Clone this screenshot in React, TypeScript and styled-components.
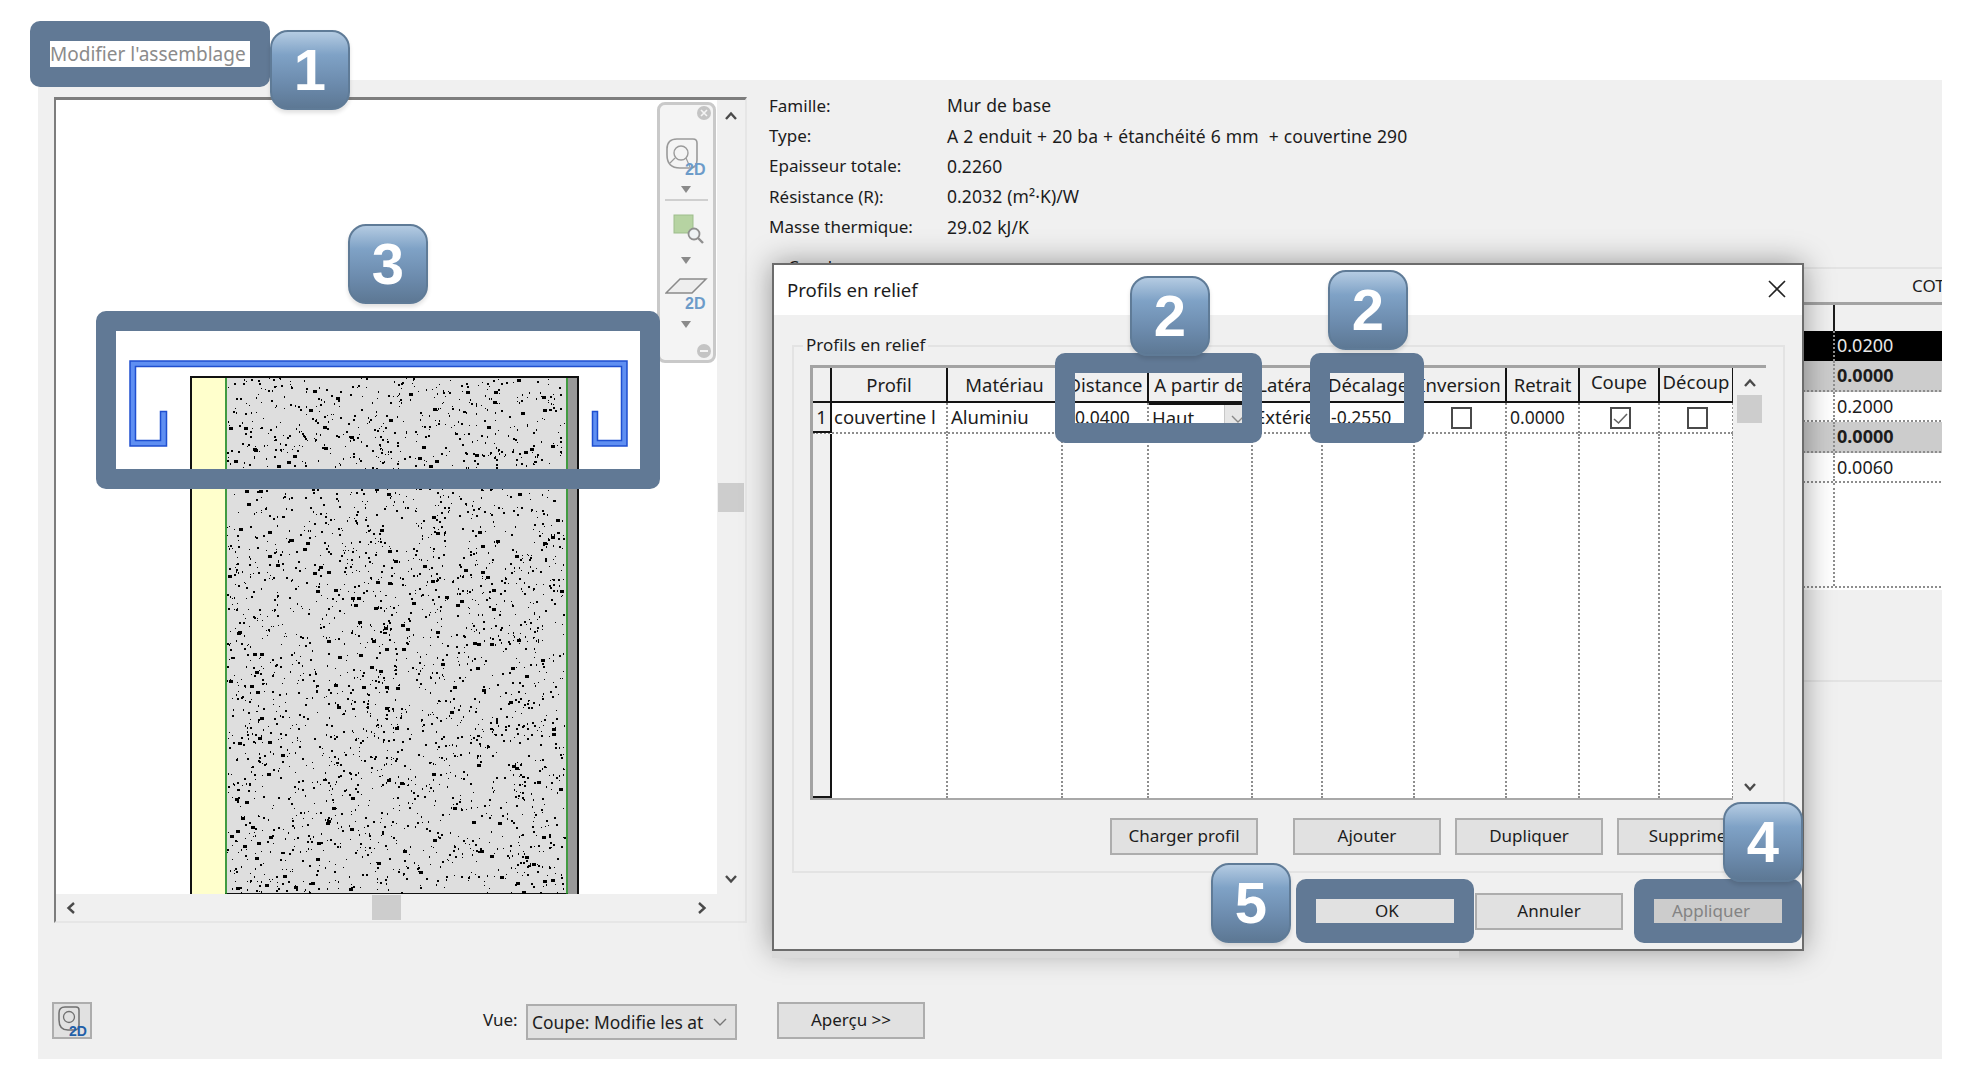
import { Fragment } from 'react';
import styled, { createGlobalStyle } from 'styled-components';

const GlobalStyle = createGlobalStyle`
  html, body {
    margin: 0;
    padding: 0;
    background: #fff;
  }
  body {
    font-family: "Noto Sans", "Open Sans", sans-serif;
    font-size: 17px;
    color: #1c1c1c;
  }
  * {
    box-sizing: border-box;
  }
`;

const HILITE = '#617995';

const Page = styled.div`
  position: relative;
  width: 1974px;
  height: 1066px;
  overflow: hidden;
  padding-top: 80px;
  filter: blur(0.45px);
`;

const Panel = styled.div`
  position: relative;
  width: 1904px;
  height: 979px;
  margin-left: 38px;
  padding: 10px 0 0 14px;
  background: #f0f0f0;
  overflow: hidden;
  display: grid;
  grid-template-columns: 695px 1fr;
  grid-template-rows: 833px 40px;
  row-gap: 79px;
  column-gap: 22px;
`;

/* overlays: numbered badges and frames */
const Badge = styled.div<{ $x: number; $y: number }>`
  position: absolute;
  left: ${(p) => p.$x}px;
  top: ${(p) => p.$y}px;
  z-index: 6;
  width: 80px;
  height: 80px;
  border: 2px solid #5f7b97;
  border-radius: 18px;
  background: linear-gradient(#b4cbe2 0%, #7fa2c6 30%, #6c8bad 68%, #5d7894 100%);
  box-shadow: 0 3px 4px rgba(0, 0, 0, 0.12);
  color: #fff;
  font-family: "Liberation Sans", Arial, sans-serif;
  font-weight: 700;
  font-size: 58px;
  line-height: 76px;
  text-align: center;
`;

const Frame = styled.div<{ $x: number; $y: number; $w: number; $h: number }>`
  position: absolute;
  left: ${(p) => p.$x}px;
  top: ${(p) => p.$y}px;
  z-index: 5;
  width: ${(p) => p.$w}px;
  height: ${(p) => p.$h}px;
  border: 20px solid ${HILITE};
  border-radius: 10px;
`;

const AssemblyLabel = styled.div`
  position: absolute;
  left: 30px;
  top: 21px;
  z-index: 5;
  width: 240px;
  height: 66px;
  padding: 20px;
  background: ${HILITE};
  border-radius: 10px;
`;

const AssemblyText = styled.div`
  height: 26px;
  background: #fff;
  color: #8b8b8b;
  font-size: 19px;
  line-height: 27px;
  white-space: nowrap;
`;

/* preview on the left */
const Preview = styled.div`
  margin: 7px 0 0 2px;
  width: 693px;
  height: 826px;
  border-top: 3px solid #7d7d7d;
  border-left: 2px solid #7d7d7d;
  border-right: 2px solid #e6e6e6;
  border-bottom: 2px solid #e6e6e6;
  display: grid;
  grid-template-columns: 661px 1fr;
  grid-template-rows: 794px 1fr;
`;

const Canvas = styled.div`
  position: relative;
  background: #fff;
  overflow: visible;
`;

const CanvasDrawing = styled.svg`
  display: block;
`;

const VScroll = styled.div`
  display: flex;
  flex-direction: column;
  align-items: center;
  padding: 9px 0 8px;
`;

const VThumb = styled.div`
  width: 26px;
  height: 29px;
  margin-top: 360px;
  margin-bottom: auto;
  background: #cdcdcd;
`;

const HScroll = styled.div`
  grid-column: 1 / -1;
  display: flex;
  align-items: center;
  padding: 0 36px 0 8px;
  justify-content: space-between;
`;

const HThumb = styled.div`
  width: 29px;
  height: 25px;
  background: #cdcdcd;
`;

const ChevronSvg = styled.svg<{ $dir: 'up' | 'down' | 'left' | 'right' }>`
  display: block;
  flex: none;
  transform: rotate(
    ${(p) => ({ up: 0, right: 90, down: 180, left: 270 })[p.$dir]}deg
  );
`;

const Chevron = ({ dir }: { dir: 'up' | 'down' | 'left' | 'right' }) => (
  <ChevronSvg $dir={dir} width="14" height="14" viewBox="0 0 14 14">
    <path d="M2 10 L7 4.5 L12 10" fill="none" stroke="#4a4a4a" strokeWidth="2.4" />
  </ChevronSvg>
);

/* floating navigation bar */
const NavBar = styled.div`
  position: absolute;
  left: 601px;
  top: 2px;
  z-index: 2;
  width: 59px;
  height: 261px;
  background: #f4f4f4;
  border: 3px solid #c9c9c9;
  border-radius: 8px;
  display: flex;
  flex-direction: column;
  align-items: center;
`;

const NavIcon = styled.svg<{ $mt: number; $shift?: number }>`
  display: block;
  flex: none;
  margin-top: ${(p) => p.$mt}px;
  margin-left: ${(p) => p.$shift ?? 0}px;
`;

const NavRule = styled.div`
  width: 43px;
  height: 2px;
  margin-top: 6px;
  background: #cfcfcf;
`;

const NavArrow = ({ mt }: { mt: number }) => (
  <NavIcon $mt={mt} $shift={-2} width="12" height="7" viewBox="0 0 12 7">
    <path d="M1 0 H11 L6 7 Z" fill="#8a8a8a" />
  </NavIcon>
);

const Wheel2D = () => (
  <>
    <path
      d="M12 1 H28 Q32 1 32 5 V22 Q32 30 25 30 H15 Q2 30 2 17 V11 Q2 1 12 1Z"
      fill="none"
      stroke="#9a9a9a"
      strokeWidth="1.6"
    />
    <circle cx="16" cy="15" r="7" fill="none" stroke="#9a9a9a" strokeWidth="1.4" />
    <path d="M10 20 L5 25 M21 20 L25 29" stroke="#9a9a9a" strokeWidth="1.2" />
  </>
);

/* info on the right */
const RightColumn = styled.div`
  min-width: 0;
`;

const InfoGrid = styled.div`
  display: grid;
  grid-template-columns: 178px 1fr;
  grid-auto-rows: 30.4px;
  align-items: center;
  white-space: pre;
`;

const InfoValue = styled.span`
  font-size: 17.5px;
  letter-spacing: 0.08px;
  word-spacing: 0.4px;
`;

const CouchesGroup = styled.div`
  position: relative;
  width: 1200px;
  height: 415px;
  margin: 25px 0 0 11px;
  border-top: 2px solid #e3e3e3;
  border-bottom: 2px solid #e3e3e3;
`;

const GroupLegend = styled.span<{ $left: number }>`
  position: absolute;
  left: ${(p) => p.$left}px;
  top: -13px;
  padding: 0 3px;
  background: #f0f0f0;
  line-height: 22px;
`;

const CouchesHead = styled.div`
  height: 33px;
  padding-left: 1132px;
  line-height: 33px;
  white-space: nowrap;
`;

const CouchesTable = styled.div`
  border-top: 3px solid #a3a3a3;
  border-bottom: 2px solid #fff;
`;

const CouchesRow = styled.div<{ $tone?: 'head' | 'dark' | 'gray' | 'plain' }>`
  display: grid;
  grid-template-columns: 1053px 1fr;
  height: ${(p) => (p.$tone === 'head' ? 26 : 30.5)}px;
  background: ${(p) =>
    p.$tone === 'dark' ? '#000' : p.$tone === 'gray' ? '#cccccc' : p.$tone === 'head' ? '#f0f0f0' : '#fff'};
  color: ${(p) => (p.$tone === 'dark' ? '#e8e8e8' : '#1c1c1c')};
  font-weight: ${(p) => (p.$tone === 'gray' ? 700 : 400)};
  font-size: 18px;
  border-bottom: ${(p) => (p.$tone === 'head' || p.$tone === 'dark' ? 'none' : '2px dotted #8d8d8d')};
`;

const CouchesCell = styled.div<{ $head?: boolean }>`
  grid-column: 2;
  padding-left: 2px;
  border-left: ${(p) => (p.$head ? '2px solid #1c1c1c' : '2px dotted #8d8d8d')};
  line-height: 28px;
`;

const CouchesFiller = styled.div`
  display: grid;
  grid-template-columns: 1053px 1fr;
  height: 105px;
  background: #fff;
  border-bottom: 2px dotted #8d8d8d;
`;

/* footer of the main window */
const BottomBar = styled.div`
  grid-column: 1 / -1;
  display: flex;
  align-items: flex-start;
`;

const Button = styled.div<{ $w?: number; $disabled?: boolean }>`
  flex: none;
  width: ${(p) => p.$w ?? 148}px;
  height: 37px;
  background: ${(p) => (p.$disabled ? '#cccccc' : '#e1e1e1')};
  border: 2px solid ${(p) => (p.$disabled ? '#bfbfbf' : '#adadad')};
  color: ${(p) => (p.$disabled ? '#838383' : '#1c1c1c')};
  line-height: 32px;
  text-align: center;
  white-space: nowrap;
  overflow: hidden;
`;

const IconButton = styled.div`
  width: 40px;
  height: 37px;
  background: #e1e1e1;
  border: 2px solid #adadad;
  display: flex;
  align-items: center;
  justify-content: center;
`;

const VueLabel = styled.span`
  width: 43px;
  margin-left: 391px;
  line-height: 36px;
`;

const Select = styled.div`
  width: 211px;
  height: 36px;
  margin-top: 2px;
  margin-right: 40px;
  padding: 0 8px 0 4px;
  background: #e1e1e1;
  border: 2px solid #adadad;
  display: flex;
  align-items: center;
  justify-content: space-between;
  font-size: 17.4px;
  white-space: nowrap;
`;

/* dialog */
const Dialog = styled.div`
  position: absolute;
  left: 734px;
  top: 183px;
  z-index: 3;
  width: 1032px;
  height: 688px;
  background: #f0f0f0;
  border: 2px solid #6c6c6c;
  box-shadow: 0 0 28px rgba(0, 0, 0, 0.38);

  &::after {
    content: '';
    position: absolute;
    left: -2px;
    top: 100%;
    width: 687px;
    height: 7px;
    margin-top: 2px;
    background: #dadada;
  }
`;

const TitleBar = styled.div`
  height: 50px;
  padding: 0 16px 2px 13px;
  background: #fff;
  font-size: 18.6px;
  display: flex;
  align-items: center;
  justify-content: space-between;
`;

const ReliefGroup = styled.div`
  position: relative;
  height: 528px;
  margin: 30px 17px 0 18px;
  padding: 18px 15px 0 16px;
  border: 2px solid #e3e3e3;
`;

const GridBox = styled.div`
  width: 956px;
  height: 435px;
  border-top: 3px solid #a3a3a3;
  border-left: 3px solid #a3a3a3;
  display: grid;
  grid-template-columns: 920px 33px;
`;

const COLUMNS = '19px 116px 115px 86px 104px 70px 92px 92px 73px 80px 74px';

const TableBody = styled.div`
  display: flex;
  flex-direction: column;
  background: #fff;
  overflow: hidden;
  border-bottom: 2px solid #a8a8a8;
  font-size: 18.5px;
`;

const HeaderRow = styled.div`
  display: grid;
  grid-template-columns: ${COLUMNS};
  height: 35px;
  flex: none;
  background: #f0f0f0;
  border-bottom: 2px solid #141414;
`;

const HeaderCell = styled.div<{ $wrap?: boolean }>`
  display: flex;
  justify-content: center;
  align-items: ${(p) => (p.$wrap ? 'flex-start' : 'center')};
  border-right: 2px solid #141414;
  overflow: hidden;
  white-space: ${(p) => (p.$wrap ? 'pre-line' : 'nowrap')};
  text-align: center;
  line-height: ${(p) => (p.$wrap ? '27px' : '30px')};
`;

const DataRow = styled.div<{ $fill?: boolean }>`
  display: grid;
  grid-template-columns: ${COLUMNS};
  height: ${(p) => (p.$fill ? 'auto' : '31px')};
  flex: ${(p) => (p.$fill ? 1 : 'none')};
  border-bottom: ${(p) => (p.$fill ? 'none' : '2px dotted #8d8d8d')};
`;

const RowHead = styled.div`
  background: #f0f0f0;
  border-right: 2px solid #141414;
  border-bottom: 2px solid #141414;
  text-align: center;
  line-height: 28px;
`;

const DataCell = styled.div<{ $center?: boolean; $num?: boolean; $pad?: number }>`
  border-right: 2px dotted #8d8d8d;
  padding-left: ${(p) => p.$pad ?? 3}px;
  font-size: ${(p) => (p.$num ? '17.5px' : 'inherit')};
  line-height: 28px;
  white-space: nowrap;
  overflow: hidden;
  display: ${(p) => (p.$center ? 'flex' : 'block')};
  justify-content: center;
  align-items: center;
`;

const ComboCell = styled.div`
  border-top: 2px solid #141414;
  border-right: 2px dotted #8d8d8d;
  padding-left: 3px;
  display: flex;
  justify-content: space-between;
  line-height: 25px;
  overflow: hidden;
`;

const ComboArrow = styled.div`
  width: 27px;
  background: #e6e6e6;
  border-left: 1px solid #c8c8c8;
  display: flex;
  align-items: center;
  justify-content: center;
`;

const CheckBox = styled.div`
  width: 21px;
  height: 22px;
  background: #fff;
  border: 2px solid #4a4a4a;
  display: flex;
  align-items: center;
  justify-content: center;
`;

const GridScroll = styled.div`
  display: flex;
  flex-direction: column;
  align-items: center;
  padding-top: 8px;
  padding-bottom: 6px;
`;

const GridThumb = styled.div`
  width: 25px;
  height: 28px;
  margin-top: 5px;
  margin-bottom: auto;
  background: #cdcdcd;
`;

const GroupButtons = styled.div`
  display: flex;
  justify-content: flex-end;
  gap: 14px;
  margin-top: 18px;
  margin-right: 3px;
`;

const SpacedButton = styled(Button)`
  margin-right: 21px;
`;

const DialogFooter = styled.div`
  display: flex;
  justify-content: flex-end;
  gap: 14px;
  margin-top: 20px;
  padding-right: 17px;
`;

/* seeded so that the concrete hatch stays the same on every render */
const makeSpeckle = (count: number) => {
  let seed = 40721;
  const next = () => {
    seed = (seed * 1664525 + 1013904223) % 4294967296;
    return seed / 4294967296;
  };
  const dots = [];
  for (let i = 0; i < count; i++) {
    const kind = next();
    dots.push({
      x: 227 + Math.floor(next() * 338),
      y: 377 + Math.floor(next() * 515),
      w: kind > 0.93 ? 4 : kind > 0.6 ? 2 : 1,
      h: kind > 0.93 ? 3 : kind > 0.4 ? 2 : 1,
    });
  }
  return dots;
};

const speckle = makeSpeckle(2900);

const WallDrawing = () => (
  <CanvasDrawing width="661" height="794" viewBox="56 99 661 794">
    <rect x="191" y="376" width="387" height="517" fill="#dedede" stroke="#111" strokeWidth="2" />
    <rect x="192" y="377" width="33" height="516" fill="#ffffcc" />
    {speckle.map((d, i) => (
      <rect key={i} x={d.x} y={d.y} width={d.w} height={d.h} fill="#000" />
    ))}
    <rect x="568" y="377" width="9" height="516" fill="#999" />
    <path d="M226 377 V893 M567 377 V893" stroke="#1a8a1a" strokeWidth="1.6" />
    <path
      d="M130 360 H627 V445 H592.5 V410.5 H597.5 V439.5 H621.5 V365.5 H135.5 V439.5 H160.5 V410.5 H166.5 V445 H130 Z"
      fill="#5f8ff2"
      stroke="#1f4fd0"
      strokeWidth="1.5"
    />
  </CanvasDrawing>
);

const headers: { label: string; wrap?: boolean }[] = [
  { label: '' },
  { label: 'Profil' },
  { label: 'Matériau' },
  { label: 'Distance' },
  { label: 'A partir de' },
  { label: 'Latéral' },
  { label: 'Décalage' },
  { label: 'Inversion' },
  { label: 'Retrait' },
  { label: 'Coupe\nl', wrap: true },
  { label: 'Découp\nl l', wrap: true },
];

const info = [
  ['Famille:', 'Mur de base'],
  ['Type:', 'A 2 enduit + 20 ba + étanchéité 6 mm  + couvertine 290'],
  ['Epaisseur totale:', '0.2260'],
  ['Résistance (R):', '0.2032 (m²·K)/W'],
  ['Masse thermique:', '29.02 kJ/K'],
];

const layers: { value: string; tone: 'dark' | 'gray' | 'plain' }[] = [
  { value: '0.0200', tone: 'dark' },
  { value: '0.0000', tone: 'gray' },
  { value: '0.2000', tone: 'plain' },
  { value: '0.0000', tone: 'gray' },
  { value: '0.0060', tone: 'plain' },
];

const App = () => (
  <Page>
    <GlobalStyle />
    <AssemblyLabel>
      <AssemblyText>Modifier l'assemblage</AssemblyText>
    </AssemblyLabel>
    <Panel>
      <Preview>
        <Canvas>
          <WallDrawing />
          <NavBar>
            <NavIcon $mt={0} $shift={34} width="16" height="16" viewBox="0 0 16 16">
              <circle cx="8" cy="8" r="7" fill="#c4c4c4" />
              <path d="M5 5 L11 11 M11 5 L5 11" stroke="#f4f4f4" strokeWidth="1.6" />
            </NavIcon>
            <NavIcon $mt={17} width="44" height="38" viewBox="0 0 44 38">
              <Wheel2D />
              <text x="20" y="37" fontFamily="Liberation Sans, sans-serif" fontSize="16" fontWeight="700" fill="#6c9bc9">
                2D
              </text>
            </NavIcon>
            <NavArrow mt={10} />
            <NavRule />
            <NavIcon $mt={13} $shift={4} width="34" height="30" viewBox="0 0 34 30">
              <rect x="2" y="1" width="19" height="18" fill="#b6d3a2" stroke="#9dbd8b" />
              <circle cx="22" cy="20" r="5.5" fill="#eef2f4" stroke="#8f8f8f" strokeWidth="1.8" />
              <path d="M26 24 L31 29" stroke="#8f8f8f" strokeWidth="2.4" />
            </NavIcon>
            <NavArrow mt={13} />
            <NavIcon $mt={14} width="44" height="32" viewBox="0 0 44 32">
              <path d="M1 15 L15 1 H41 L27 15 Z" fill="#eeeeee" stroke="#8a8a8a" strokeWidth="1.5" />
              <text x="20" y="31" fontFamily="Liberation Sans, sans-serif" fontSize="16" fontWeight="700" fill="#6c9bc9">
                2D
              </text>
            </NavIcon>
            <NavArrow mt={11} />
            <NavIcon $mt={15} $shift={34} width="16" height="16" viewBox="0 0 16 16">
              <circle cx="8" cy="8" r="7" fill="#c4c4c4" />
              <path d="M4 8 H12" stroke="#f4f4f4" strokeWidth="2" />
            </NavIcon>
          </NavBar>
        </Canvas>
        <VScroll>
          <Chevron dir="up" />
          <VThumb />
          <Chevron dir="down" />
        </VScroll>
        <HScroll>
          <Chevron dir="left" />
          <HThumb />
          <Chevron dir="right" />
        </HScroll>
      </Preview>

      <RightColumn>
        <InfoGrid>
          {info.map(([label, value]) => (
            <Fragment key={label}>
              <span>{label}</span>
              <InfoValue>{value}</InfoValue>
            </Fragment>
          ))}
        </InfoGrid>
        <CouchesGroup>
          <GroupLegend $left={5}>Couches</GroupLegend>
          <CouchesHead>COTE</CouchesHead>
          <CouchesTable>
            <CouchesRow $tone="head">
              <CouchesCell $head />
            </CouchesRow>
            {layers.map((layer, i) => (
              <CouchesRow key={i} $tone={layer.tone}>
                <CouchesCell>{layer.value}</CouchesCell>
              </CouchesRow>
            ))}
            <CouchesFiller>
              <CouchesCell />
            </CouchesFiller>
          </CouchesTable>
        </CouchesGroup>
      </RightColumn>

      <BottomBar>
        <IconButton>
          <svg width="30" height="32" viewBox="0 0 30 32">
            <path
              d="M8 2 H19 Q22 2 22 5 V20 Q22 25 17 25 H11 Q2 25 2 15 V8 Q2 2 8 2Z"
              fill="none"
              stroke="#6f6f6f"
              strokeWidth="1.5"
            />
            <circle cx="12" cy="12" r="5.5" fill="none" stroke="#6f6f6f" strokeWidth="1.3" />
            <text x="12" y="31" fontFamily="Liberation Sans, sans-serif" fontSize="14" fontWeight="700" fill="#1f5fa8">
              2D
            </text>
          </svg>
        </IconButton>
        <VueLabel>Vue:</VueLabel>
        <Select>
          Coupe: Modifie les at
          <svg width="14" height="10" viewBox="0 0 14 10">
            <path d="M1 2 L7 8 L13 2" fill="none" stroke="#777" strokeWidth="1.4" />
          </svg>
        </Select>
        <Button>Aperçu &gt;&gt;</Button>
      </BottomBar>

      <Dialog>
        <TitleBar>
          Profils en relief
          <svg width="18" height="18" viewBox="0 0 18 18">
            <path d="M1 1 L17 17 M17 1 L1 17" stroke="#222" strokeWidth="1.6" />
          </svg>
        </TitleBar>
        <ReliefGroup>
          <GroupLegend $left={9}>Profils en relief</GroupLegend>
          <GridBox>
            <TableBody>
              <HeaderRow>
                {headers.map((h, i) => (
                  <HeaderCell key={i} $wrap={h.wrap}>
                    {h.label}
                  </HeaderCell>
                ))}
              </HeaderRow>
              <DataRow>
                <RowHead>1</RowHead>
                <DataCell $pad={2}>couvertine l</DataCell>
                <DataCell>Aluminiu</DataCell>
                <DataCell $num $pad={12}>0.0400</DataCell>
                <ComboCell>
                  Haut
                  <ComboArrow>
                    <svg width="14" height="10" viewBox="0 0 14 10">
                      <path d="M1 2 L7 8 L13 2" fill="none" stroke="#888" strokeWidth="1.4" />
                    </svg>
                  </ComboArrow>
                </ComboCell>
                <DataCell $pad={2}>Extérieur</DataCell>
                <DataCell $num $pad={8}>-0.2550</DataCell>
                <DataCell $center>
                  <CheckBox />
                </DataCell>
                <DataCell $num>0.0000</DataCell>
                <DataCell $center>
                  <CheckBox>
                    <svg width="15" height="13" viewBox="0 0 15 13">
                      <path d="M1 7 L5.5 11 L14 2" fill="none" stroke="#666" strokeWidth="1.6" />
                    </svg>
                  </CheckBox>
                </DataCell>
                <DataCell $center>
                  <CheckBox />
                </DataCell>
              </DataRow>
              <DataRow $fill>
                {headers.map((h, i) =>
                  i === 0 ? <RowHead key={i} /> : <DataCell key={h.label} />
                )}
              </DataRow>
            </TableBody>
            <GridScroll>
              <Chevron dir="up" />
              <GridThumb />
              <Chevron dir="down" />
            </GridScroll>
          </GridBox>
          <GroupButtons>
            <SpacedButton>Charger profil</SpacedButton>
            <Button>Ajouter</Button>
            <Button>Dupliquer</Button>
            <Button>Supprimer</Button>
          </GroupButtons>
        </ReliefGroup>
        <DialogFooter>
          <Button>OK</Button>
          <Button>Annuler</Button>
          <Button $disabled>Appliquer</Button>
        </DialogFooter>
      </Dialog>
    </Panel>

    <Frame $x={96} $y={311} $w={564} $h={178} />
    <Frame $x={1055} $y={353} $w={207} $h={90} />
    <Frame $x={1310} $y={353} $w={114} $h={90} />
    <Frame $x={1296} $y={879} $w={178} $h={64} />
    <Frame $x={1634} $y={879} $w={168} $h={64} />

    <Badge $x={270} $y={30}>1</Badge>
    <Badge $x={348} $y={224}>3</Badge>
    <Badge $x={1130} $y={276}>2</Badge>
    <Badge $x={1328} $y={270}>2</Badge>
    <Badge $x={1723} $y={802}>4</Badge>
    <Badge $x={1211} $y={863}>5</Badge>
  </Page>
);

export default App;
